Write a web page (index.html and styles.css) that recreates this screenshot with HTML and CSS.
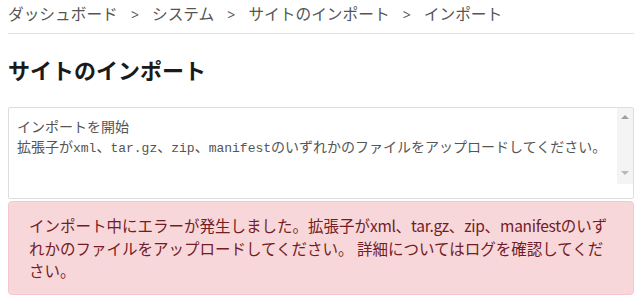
FILE: index.html
```html
<!DOCTYPE html>
<html lang="ja">
<head>
    <meta charset="UTF-8">
    <meta name="viewport" content="width=device-width, initial-scale=1.0">
    <title>サイトのインポート</title>
    <link rel="stylesheet" href="styles.css">
</head>
<body>
    <nav class="breadcrumb">
        <a href="#">ダッシュボード</a>
        <span class="sep">&gt;</span>
        <a href="#">システム</a>
        <span class="sep">&gt;</span>
        <a href="#">サイトのインポート</a>
        <span class="sep">&gt;</span>
        <span class="current">インポート</span>
    </nav>
    <h1>サイトのインポート</h1>
    <div class="log">
        <div class="log-text">
            <div>インポートを開始</div>
            <div>拡張子が<code>xml</code>、<code>tar.gz</code>、<code>zip</code>、<code>manifest</code>のいずれかのファイルをアップロードしてください。</div>
        </div>
        <div class="scrollbar">
            <span class="arrow-up"></span>
            <span class="arrow-down"></span>
        </div>
    </div>
    <div class="alert">
        インポート中にエラーが発生しました。拡張子が<span class="ext">xml</span>、<span class="ext">tar.gz</span>、<span class="ext">zip</span>、<span class="ext">manifest</span>のいずれかのファイルをアップロードしてください。 詳細についてはログを確認してください。
    </div>
</body>
</html>
```

FILE: styles.css
```css
body {
    margin: 0 6px 0 8px;
    font-family: "Open Sans", "Noto Sans CJK JP", sans-serif;
    color: #212529;
    background: #fff;
}
.breadcrumb {
    padding: 2px 0 6px;
    line-height: 24px;
    font-size: 15.7px;
    color: #555;
    border-bottom: 1px solid #e3e3e3;
}
.breadcrumb a {
    color: #555;
    text-decoration: none;
}
.breadcrumb .sep {
    margin: 0 9px;
    font-size: 14px;
}
h1 {
    margin: 23px 0 24px;
    font-size: 22px;
    line-height: 26px;
    font-weight: bold;
    color: #1a1a1a;
}
/* ログ欄（読み取り専用のテキストエリア風） */
.log {
    display: flex;
    box-sizing: border-box;
    height: 92px;
    border: 1px solid #ddd;
    border-radius: 2px;
    color: #555;
}
.log-text {
    flex: 1;
    padding: 8px;
    font-family: "Noto Sans CJK JP", sans-serif;
    font-size: 14px;
    line-height: 20px;
    white-space: nowrap;
    overflow: hidden;
}
.log-text code {
    font-family: "Liberation Mono", monospace;
    font-size: 13px;
}
.scrollbar {
    width: 16px;
    height: 76px;
    background: #f4f4f4;
    display: flex;
    flex-direction: column;
    justify-content: space-between;
    align-items: center;
    padding: 7px 0 9px;
    box-sizing: border-box;
}
.arrow-up, .arrow-down {
    width: 0;
    height: 0;
    border-left: 4px solid transparent;
    border-right: 4px solid transparent;
}
.arrow-up {
    border-bottom: 4px solid #a0a0a0;
}
.arrow-down {
    border-top: 4px solid #b8b8b8;
}
.alert {
    margin-top: 2px;
    padding: 12px 20px;
    border: 1px solid #f5c6cb;
    border-radius: 4px;
    background: #f8d7da;
    color: #721c24;
    font-family: "Noto Sans CJK JP", sans-serif;
    font-size: 15.5px;
    line-height: 22.5px;
}
.alert .ext {
    letter-spacing: -0.3px;
}
```
